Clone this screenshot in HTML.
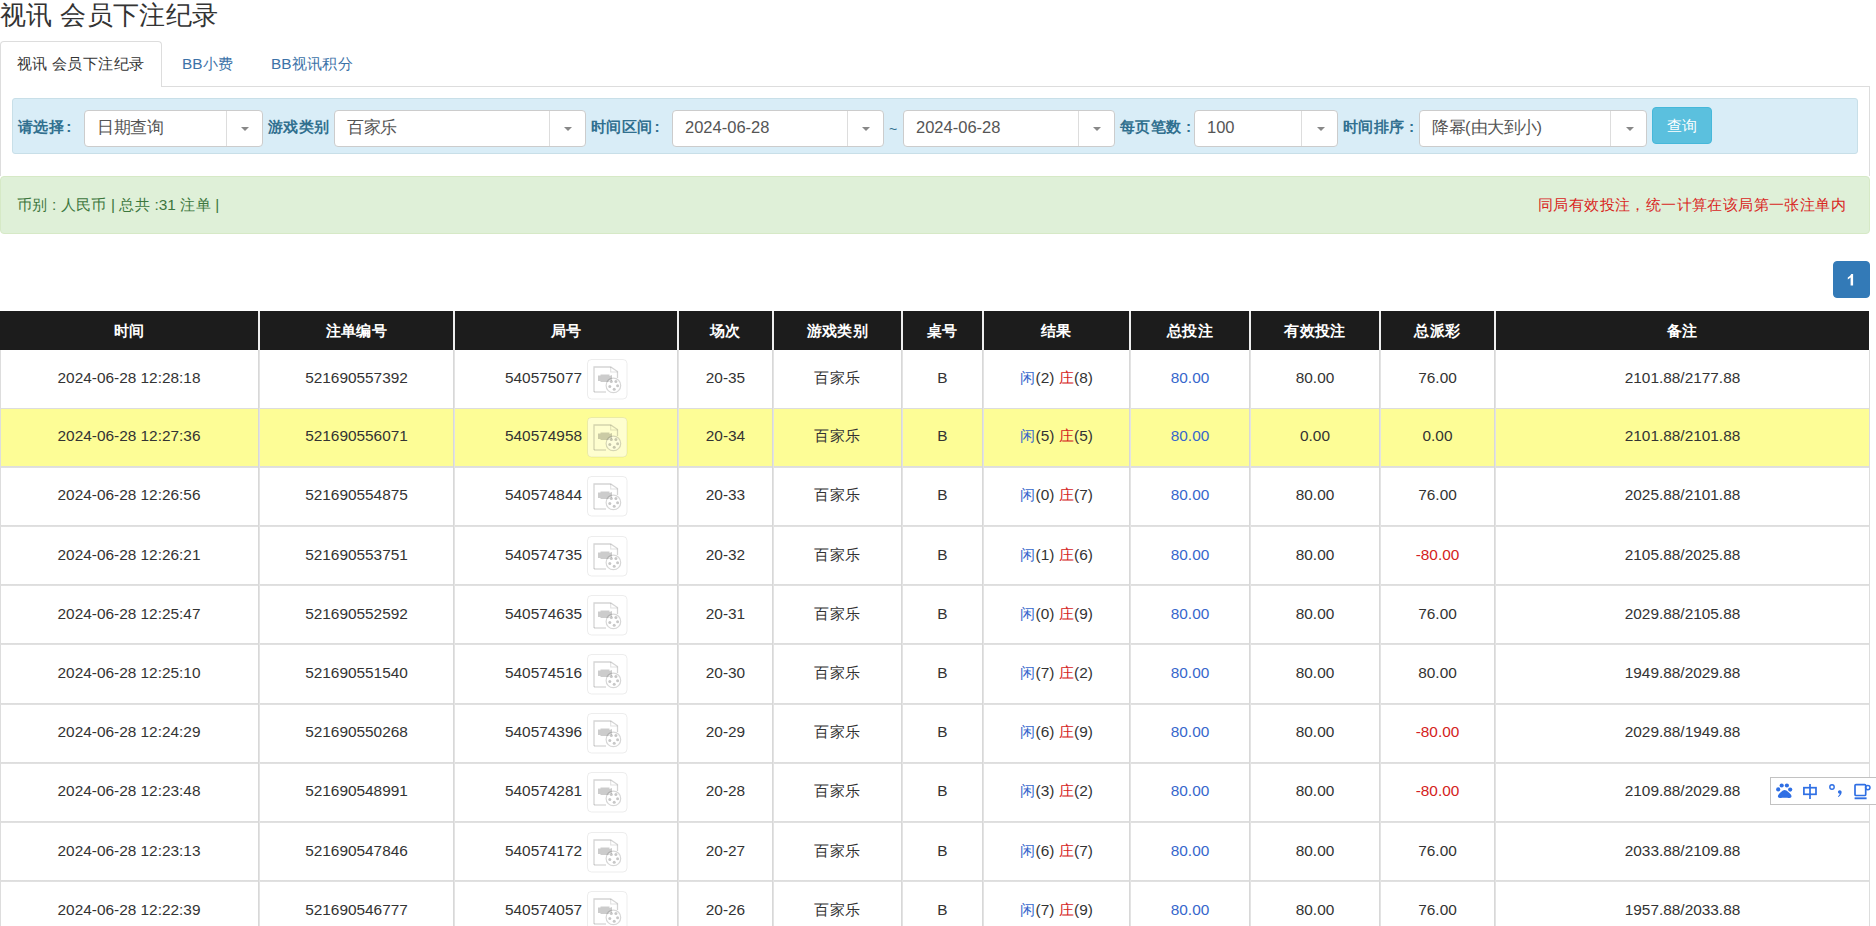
<!DOCTYPE html>
<html><head><meta charset="utf-8">
<style>
*{box-sizing:border-box;margin:0;padding:0}
html,body{width:1876px;height:926px;overflow:hidden;background:#fff}
body{font-family:"Liberation Sans",sans-serif;color:#333;font-size:15.4px;position:relative}
.a{position:absolute;white-space:nowrap}
.title{left:0;top:0;font-size:26.4px;line-height:30px;color:#333}
.tab{left:0;top:41px;width:162px;height:46px;border:1px solid #ddd;border-bottom:none;border-radius:4px 4px 0 0;background:#fff}
.tabline{left:161px;top:86px;width:1709px;height:1px;background:#ddd}
.pane{left:0;top:86px;width:1870px;height:90px;border-left:1px solid #ddd;border-right:1px solid #ddd}
.tabtxt{top:53px;line-height:22px;font-size:15.4px}
.filter{left:12px;top:98px;width:1846px;height:56px;background:#d9edf7;border:1px solid #c8dfe8;border-radius:3px}
.lbl{top:116px;line-height:22px;font-weight:bold;color:#31708f;font-size:15.4px}
.sel{top:110px;height:37px;background:#fff;border:1px solid #ccc;border-radius:4px}
.sel .t{position:absolute;left:12px;top:5px;line-height:22px;font-size:16.5px;color:#555}
.sel .sep{position:absolute;top:0;bottom:0;width:1px;background:#ddd}
.sel .car{position:absolute;top:16px;width:0;height:0;border-left:4px solid transparent;border-right:4px solid transparent;border-top:4px solid #888}
.btn{left:1652px;top:107px;width:60px;height:37px;background:#5bc0de;border:1px solid #46b8da;border-radius:4px;color:#fff;text-align:center;line-height:35px;font-size:15.4px}
.alert{left:0;top:176px;width:1870px;height:58px;background:#dff0d8;border:1px solid #d6e9c6;border-radius:4px}
.atxt{top:194px;line-height:22px;font-size:15.4px;color:#3c763d}
.ared{color:#d9251d}
.page{left:1833px;top:261px;width:37px;height:37px;background:#337ab7;border:1px solid #337ab7;border-radius:4px;color:#fff;text-align:center;line-height:35px;font-size:15.4px;font-weight:bold}
.tbl{left:0;top:311px;width:1870px}
.hd{position:absolute;top:0;height:39px;background:#1c1c1c;color:#fff;font-weight:bold;text-align:center;line-height:39px;font-size:15.4px}
.vl{position:absolute;width:2px;background:#ddd}
.hl{position:absolute;left:0;width:1870px;height:1px;background:#ddd}
.row{position:absolute;left:0;width:1870px}
.c{position:absolute;text-align:center;line-height:22px;font-size:15.4px;color:#333}
.blue{color:#3767cc}
.red{color:#d42222}
.ico{position:absolute}
.z{letter-spacing:.4px}
.sel .t .z{letter-spacing:-.5px}
</style></head><body>
<div class="a title"><span class="z">视讯</span> <span class="z">会员下注纪录</span></div>
<div class="a pane"></div>
<div class="a tab"></div>
<div class="a tabline"></div>
<div class="a tabtxt" style="left:17px"><span class="z">视讯</span> <span class="z">会员下注纪录</span></div>
<div class="a tabtxt" style="left:182px;color:#3c72a8">BB<span class="z">小费</span></div>
<div class="a tabtxt" style="left:271px;color:#3c72a8">BB<span class="z">视讯积分</span></div>

<div class="a filter"></div>
<div class="a lbl" style="left:18px"><span class="z">请选择</span><span style="margin-left:2px">:</span></div>
<div class="a sel" style="left:84px;width:179px"><span class="t"><span class="z">日期查询</span></span><span class="sep" style="left:141px"></span><span class="car" style="left:156px"></span></div>
<div class="a lbl" style="left:268px"><span class="z">游戏类别</span></div>
<div class="a sel" style="left:334px;width:252px"><span class="t"><span class="z">百家乐</span></span><span class="sep" style="left:214px"></span><span class="car" style="left:229px"></span></div>
<div class="a lbl" style="left:591px"><span class="z">时间区间</span><span style="margin-left:2px">:</span></div>
<div class="a sel" style="left:672px;width:212px"><span class="t">2024-06-28</span><span class="sep" style="left:174px"></span><span class="car" style="left:189px"></span></div>
<div class="a" style="left:889px;top:118px;line-height:22px;color:#31708f;font-size:14px">~</div>
<div class="a sel" style="left:903px;width:212px"><span class="t">2024-06-28</span><span class="sep" style="left:174px"></span><span class="car" style="left:189px"></span></div>
<div class="a lbl" style="left:1120px"><span class="z">每页笔数</span> :</div>
<div class="a sel" style="left:1194px;width:144px"><span class="t">100</span><span class="sep" style="left:106px"></span><span class="car" style="left:122px"></span></div>
<div class="a lbl" style="left:1343px"><span class="z">时间排序</span> :</div>
<div class="a sel" style="left:1419px;width:228px"><span class="t"><span class="z">降幂</span>(<span class="z">由大到小</span>)</span><span class="sep" style="left:190px"></span><span class="car" style="left:206px"></span></div>
<div class="a btn"><span class="z">查询</span></div>

<div class="a alert"></div>
<div class="a atxt" style="left:17px"><span class="z">币别</span> : <span class="z">人民币</span> | <span class="z">总共</span> :31 <span class="z">注单</span> |</div>
<div class="a atxt ared" style="left:1538px"><span class="z">同局有效投注，统一计算在该局第一张注单内</span></div>

<div class="a page"></div><svg class="a" style="left:1833px;top:261px" width="37" height="37" viewBox="0 0 37 37"><path d="M17.6 24.4V16.6C16.8 17.4 15.8 18 14.8 18.4V16.4C16.3 15.7 17.6 14.6 18.3 13H20.1V24.4Z" fill="#fff"/></svg>

<div class="a tbl">
<div class="hd" style="left:0px;width:258px"><span class="z">时间</span></div>
<div class="hd" style="left:260px;width:193px"><span class="z">注单编号</span></div>
<div class="hd" style="left:455px;width:222px"><span class="z">局号</span></div>
<div class="hd" style="left:679px;width:93px"><span class="z">场次</span></div>
<div class="hd" style="left:774px;width:127px"><span class="z">游戏类别</span></div>
<div class="hd" style="left:903px;width:79px"><span class="z">桌号</span></div>
<div class="hd" style="left:984px;width:145px"><span class="z">结果</span></div>
<div class="hd" style="left:1131px;width:118px"><span class="z">总投注</span></div>
<div class="hd" style="left:1251px;width:128px"><span class="z">有效投注</span></div>
<div class="hd" style="left:1381px;width:113px"><span class="z">总派彩</span></div>
<div class="hd" style="left:1496px;width:373px"><span class="z">备注</span></div>
<div class="row" style="top:98px;height:57px;background:#fdfd96"></div>
<div class="hl" style="top:97px;height:1px"></div>
<div class="hl" style="top:155px;height:2px;background:linear-gradient(#dcdcdc,#e2e2e2)"></div>
<div class="hl" style="top:214px;height:2px;background:linear-gradient(#dcdcdc,#e2e2e2)"></div>
<div class="hl" style="top:273px;height:2px;background:linear-gradient(#dcdcdc,#e2e2e2)"></div>
<div class="hl" style="top:332px;height:2px;background:linear-gradient(#dcdcdc,#e2e2e2)"></div>
<div class="hl" style="top:392px;height:2px;background:linear-gradient(#dcdcdc,#e2e2e2)"></div>
<div class="hl" style="top:451px;height:2px;background:linear-gradient(#dcdcdc,#e2e2e2)"></div>
<div class="hl" style="top:510px;height:2px;background:linear-gradient(#dcdcdc,#e2e2e2)"></div>
<div class="hl" style="top:569px;height:2px;background:linear-gradient(#dcdcdc,#e2e2e2)"></div>
<div class="hl" style="top:628px;height:2px;background:linear-gradient(#dcdcdc,#e2e2e2)"></div>
<div class="vl" style="left:0;top:39px;height:700px;width:1px;background:#ddd"></div>
<div class="vl" style="left:1869px;top:39px;height:700px;width:1px;background:#ddd"></div>
<div class="vl" style="left:258px;top:0;height:39px;background:#eee"></div>
<div class="vl" style="left:258px;top:39px;height:700px;background:linear-gradient(90deg,#d8d8d8 50%,#e3e3e3 50%)"></div>
<div class="vl" style="left:453px;top:0;height:39px;background:#eee"></div>
<div class="vl" style="left:453px;top:39px;height:700px;background:linear-gradient(90deg,#d8d8d8 50%,#e3e3e3 50%)"></div>
<div class="vl" style="left:677px;top:0;height:39px;background:#eee"></div>
<div class="vl" style="left:677px;top:39px;height:700px;background:linear-gradient(90deg,#d8d8d8 50%,#e3e3e3 50%)"></div>
<div class="vl" style="left:772px;top:0;height:39px;background:#eee"></div>
<div class="vl" style="left:772px;top:39px;height:700px;background:linear-gradient(90deg,#d8d8d8 50%,#e3e3e3 50%)"></div>
<div class="vl" style="left:901px;top:0;height:39px;background:#eee"></div>
<div class="vl" style="left:901px;top:39px;height:700px;background:linear-gradient(90deg,#d8d8d8 50%,#e3e3e3 50%)"></div>
<div class="vl" style="left:982px;top:0;height:39px;background:#eee"></div>
<div class="vl" style="left:982px;top:39px;height:700px;background:linear-gradient(90deg,#d8d8d8 50%,#e3e3e3 50%)"></div>
<div class="vl" style="left:1129px;top:0;height:39px;background:#eee"></div>
<div class="vl" style="left:1129px;top:39px;height:700px;background:linear-gradient(90deg,#d8d8d8 50%,#e3e3e3 50%)"></div>
<div class="vl" style="left:1249px;top:0;height:39px;background:#eee"></div>
<div class="vl" style="left:1249px;top:39px;height:700px;background:linear-gradient(90deg,#d8d8d8 50%,#e3e3e3 50%)"></div>
<div class="vl" style="left:1379px;top:0;height:39px;background:#eee"></div>
<div class="vl" style="left:1379px;top:39px;height:700px;background:linear-gradient(90deg,#d8d8d8 50%,#e3e3e3 50%)"></div>
<div class="vl" style="left:1494px;top:0;height:39px;background:#eee"></div>
<div class="vl" style="left:1494px;top:39px;height:700px;background:linear-gradient(90deg,#d8d8d8 50%,#e3e3e3 50%)"></div>
<div class="c" style="left:0px;width:258px;top:56px">2024-06-28 12:28:18</div>
<div class="c" style="left:260px;width:193px;top:56px">521690557392</div>
<div class="c" style="left:455px;width:222px;top:56px">540575077<span style="display:inline-block;width:45px"></span></div>
<svg class="ico" style="left:587px;top:48px" width="41" height="41" viewBox="0 0 41 41"><rect x="0.5" y="0.5" width="39.5" height="39.5" rx="4" fill="rgba(255,255,255,.55)" stroke="rgba(0,0,0,.07)"/><path d="M7 33V8H23.7L30.5 12.5V19" fill="none" stroke="rgba(0,0,0,.17)" stroke-width="1.3"/><path d="M23.7 8V13H30.5" fill="none" stroke="rgba(0,0,0,.12)" stroke-width="1.1"/><path d="M7 33H19" fill="none" stroke="rgba(0,0,0,.17)" stroke-width="1.3"/><path d="M11 16.5H13.5V15.5H22.5V17L25 16V22L22.5 21V23H13.5V22H11Z" fill="rgba(0,0,0,.2)"/><circle cx="26.4" cy="26.4" r="7.3" fill="rgba(255,255,255,.3)" stroke="rgba(0,0,0,.16)" stroke-width="1.2"/><g fill="rgba(0,0,0,.22)"><circle cx="24.3" cy="22.6" r="1.5"/><circle cx="28.9" cy="22.6" r="1.5"/><circle cx="30.6" cy="26.8" r="1.5"/><circle cx="27.2" cy="30.2" r="1.5"/><circle cx="22.8" cy="27.6" r="1.5"/></g></svg>
<div class="c" style="left:679px;width:93px;top:56px">20-35</div>
<div class="c" style="left:774px;width:127px;top:56px"><span class="z">百家乐</span></div>
<div class="c" style="left:903px;width:79px;top:56px">B</div>
<div class="c" style="left:984px;width:145px;top:56px"><span class="blue"><span class="z">闲</span></span>(2) <span class="red"><span class="z">庄</span></span>(8)</div>
<div class="c" style="left:1131px;width:118px;top:56px"><span class="blue">80.00</span></div>
<div class="c" style="left:1251px;width:128px;top:56px">80.00</div>
<div class="c" style="left:1381px;width:113px;top:56px">76.00</div>
<div class="c" style="left:1496px;width:373px;top:56px">2101.88/2177.88</div>
<div class="c" style="left:0px;width:258px;top:114px">2024-06-28 12:27:36</div>
<div class="c" style="left:260px;width:193px;top:114px">521690556071</div>
<div class="c" style="left:455px;width:222px;top:114px">540574958<span style="display:inline-block;width:45px"></span></div>
<svg class="ico" style="left:587px;top:106px" width="41" height="41" viewBox="0 0 41 41"><rect x="0.5" y="0.5" width="39.5" height="39.5" rx="4" fill="rgba(255,255,255,.55)" stroke="rgba(0,0,0,.07)"/><path d="M7 33V8H23.7L30.5 12.5V19" fill="none" stroke="rgba(0,0,0,.17)" stroke-width="1.3"/><path d="M23.7 8V13H30.5" fill="none" stroke="rgba(0,0,0,.12)" stroke-width="1.1"/><path d="M7 33H19" fill="none" stroke="rgba(0,0,0,.17)" stroke-width="1.3"/><path d="M11 16.5H13.5V15.5H22.5V17L25 16V22L22.5 21V23H13.5V22H11Z" fill="rgba(0,0,0,.2)"/><circle cx="26.4" cy="26.4" r="7.3" fill="rgba(255,255,255,.3)" stroke="rgba(0,0,0,.16)" stroke-width="1.2"/><g fill="rgba(0,0,0,.22)"><circle cx="24.3" cy="22.6" r="1.5"/><circle cx="28.9" cy="22.6" r="1.5"/><circle cx="30.6" cy="26.8" r="1.5"/><circle cx="27.2" cy="30.2" r="1.5"/><circle cx="22.8" cy="27.6" r="1.5"/></g></svg>
<div class="c" style="left:679px;width:93px;top:114px">20-34</div>
<div class="c" style="left:774px;width:127px;top:114px"><span class="z">百家乐</span></div>
<div class="c" style="left:903px;width:79px;top:114px">B</div>
<div class="c" style="left:984px;width:145px;top:114px"><span class="blue"><span class="z">闲</span></span>(5) <span class="red"><span class="z">庄</span></span>(5)</div>
<div class="c" style="left:1131px;width:118px;top:114px"><span class="blue">80.00</span></div>
<div class="c" style="left:1251px;width:128px;top:114px">0.00</div>
<div class="c" style="left:1381px;width:113px;top:114px">0.00</div>
<div class="c" style="left:1496px;width:373px;top:114px">2101.88/2101.88</div>
<div class="c" style="left:0px;width:258px;top:173px">2024-06-28 12:26:56</div>
<div class="c" style="left:260px;width:193px;top:173px">521690554875</div>
<div class="c" style="left:455px;width:222px;top:173px">540574844<span style="display:inline-block;width:45px"></span></div>
<svg class="ico" style="left:587px;top:165px" width="41" height="41" viewBox="0 0 41 41"><rect x="0.5" y="0.5" width="39.5" height="39.5" rx="4" fill="rgba(255,255,255,.55)" stroke="rgba(0,0,0,.07)"/><path d="M7 33V8H23.7L30.5 12.5V19" fill="none" stroke="rgba(0,0,0,.17)" stroke-width="1.3"/><path d="M23.7 8V13H30.5" fill="none" stroke="rgba(0,0,0,.12)" stroke-width="1.1"/><path d="M7 33H19" fill="none" stroke="rgba(0,0,0,.17)" stroke-width="1.3"/><path d="M11 16.5H13.5V15.5H22.5V17L25 16V22L22.5 21V23H13.5V22H11Z" fill="rgba(0,0,0,.2)"/><circle cx="26.4" cy="26.4" r="7.3" fill="rgba(255,255,255,.3)" stroke="rgba(0,0,0,.16)" stroke-width="1.2"/><g fill="rgba(0,0,0,.22)"><circle cx="24.3" cy="22.6" r="1.5"/><circle cx="28.9" cy="22.6" r="1.5"/><circle cx="30.6" cy="26.8" r="1.5"/><circle cx="27.2" cy="30.2" r="1.5"/><circle cx="22.8" cy="27.6" r="1.5"/></g></svg>
<div class="c" style="left:679px;width:93px;top:173px">20-33</div>
<div class="c" style="left:774px;width:127px;top:173px"><span class="z">百家乐</span></div>
<div class="c" style="left:903px;width:79px;top:173px">B</div>
<div class="c" style="left:984px;width:145px;top:173px"><span class="blue"><span class="z">闲</span></span>(0) <span class="red"><span class="z">庄</span></span>(7)</div>
<div class="c" style="left:1131px;width:118px;top:173px"><span class="blue">80.00</span></div>
<div class="c" style="left:1251px;width:128px;top:173px">80.00</div>
<div class="c" style="left:1381px;width:113px;top:173px">76.00</div>
<div class="c" style="left:1496px;width:373px;top:173px">2025.88/2101.88</div>
<div class="c" style="left:0px;width:258px;top:233px">2024-06-28 12:26:21</div>
<div class="c" style="left:260px;width:193px;top:233px">521690553751</div>
<div class="c" style="left:455px;width:222px;top:233px">540574735<span style="display:inline-block;width:45px"></span></div>
<svg class="ico" style="left:587px;top:225px" width="41" height="41" viewBox="0 0 41 41"><rect x="0.5" y="0.5" width="39.5" height="39.5" rx="4" fill="rgba(255,255,255,.55)" stroke="rgba(0,0,0,.07)"/><path d="M7 33V8H23.7L30.5 12.5V19" fill="none" stroke="rgba(0,0,0,.17)" stroke-width="1.3"/><path d="M23.7 8V13H30.5" fill="none" stroke="rgba(0,0,0,.12)" stroke-width="1.1"/><path d="M7 33H19" fill="none" stroke="rgba(0,0,0,.17)" stroke-width="1.3"/><path d="M11 16.5H13.5V15.5H22.5V17L25 16V22L22.5 21V23H13.5V22H11Z" fill="rgba(0,0,0,.2)"/><circle cx="26.4" cy="26.4" r="7.3" fill="rgba(255,255,255,.3)" stroke="rgba(0,0,0,.16)" stroke-width="1.2"/><g fill="rgba(0,0,0,.22)"><circle cx="24.3" cy="22.6" r="1.5"/><circle cx="28.9" cy="22.6" r="1.5"/><circle cx="30.6" cy="26.8" r="1.5"/><circle cx="27.2" cy="30.2" r="1.5"/><circle cx="22.8" cy="27.6" r="1.5"/></g></svg>
<div class="c" style="left:679px;width:93px;top:233px">20-32</div>
<div class="c" style="left:774px;width:127px;top:233px"><span class="z">百家乐</span></div>
<div class="c" style="left:903px;width:79px;top:233px">B</div>
<div class="c" style="left:984px;width:145px;top:233px"><span class="blue"><span class="z">闲</span></span>(1) <span class="red"><span class="z">庄</span></span>(6)</div>
<div class="c" style="left:1131px;width:118px;top:233px"><span class="blue">80.00</span></div>
<div class="c" style="left:1251px;width:128px;top:233px">80.00</div>
<div class="c" style="left:1381px;width:113px;top:233px"><span class="red">-80.00</span></div>
<div class="c" style="left:1496px;width:373px;top:233px">2105.88/2025.88</div>
<div class="c" style="left:0px;width:258px;top:292px">2024-06-28 12:25:47</div>
<div class="c" style="left:260px;width:193px;top:292px">521690552592</div>
<div class="c" style="left:455px;width:222px;top:292px">540574635<span style="display:inline-block;width:45px"></span></div>
<svg class="ico" style="left:587px;top:284px" width="41" height="41" viewBox="0 0 41 41"><rect x="0.5" y="0.5" width="39.5" height="39.5" rx="4" fill="rgba(255,255,255,.55)" stroke="rgba(0,0,0,.07)"/><path d="M7 33V8H23.7L30.5 12.5V19" fill="none" stroke="rgba(0,0,0,.17)" stroke-width="1.3"/><path d="M23.7 8V13H30.5" fill="none" stroke="rgba(0,0,0,.12)" stroke-width="1.1"/><path d="M7 33H19" fill="none" stroke="rgba(0,0,0,.17)" stroke-width="1.3"/><path d="M11 16.5H13.5V15.5H22.5V17L25 16V22L22.5 21V23H13.5V22H11Z" fill="rgba(0,0,0,.2)"/><circle cx="26.4" cy="26.4" r="7.3" fill="rgba(255,255,255,.3)" stroke="rgba(0,0,0,.16)" stroke-width="1.2"/><g fill="rgba(0,0,0,.22)"><circle cx="24.3" cy="22.6" r="1.5"/><circle cx="28.9" cy="22.6" r="1.5"/><circle cx="30.6" cy="26.8" r="1.5"/><circle cx="27.2" cy="30.2" r="1.5"/><circle cx="22.8" cy="27.6" r="1.5"/></g></svg>
<div class="c" style="left:679px;width:93px;top:292px">20-31</div>
<div class="c" style="left:774px;width:127px;top:292px"><span class="z">百家乐</span></div>
<div class="c" style="left:903px;width:79px;top:292px">B</div>
<div class="c" style="left:984px;width:145px;top:292px"><span class="blue"><span class="z">闲</span></span>(0) <span class="red"><span class="z">庄</span></span>(9)</div>
<div class="c" style="left:1131px;width:118px;top:292px"><span class="blue">80.00</span></div>
<div class="c" style="left:1251px;width:128px;top:292px">80.00</div>
<div class="c" style="left:1381px;width:113px;top:292px">76.00</div>
<div class="c" style="left:1496px;width:373px;top:292px">2029.88/2105.88</div>
<div class="c" style="left:0px;width:258px;top:351px">2024-06-28 12:25:10</div>
<div class="c" style="left:260px;width:193px;top:351px">521690551540</div>
<div class="c" style="left:455px;width:222px;top:351px">540574516<span style="display:inline-block;width:45px"></span></div>
<svg class="ico" style="left:587px;top:343px" width="41" height="41" viewBox="0 0 41 41"><rect x="0.5" y="0.5" width="39.5" height="39.5" rx="4" fill="rgba(255,255,255,.55)" stroke="rgba(0,0,0,.07)"/><path d="M7 33V8H23.7L30.5 12.5V19" fill="none" stroke="rgba(0,0,0,.17)" stroke-width="1.3"/><path d="M23.7 8V13H30.5" fill="none" stroke="rgba(0,0,0,.12)" stroke-width="1.1"/><path d="M7 33H19" fill="none" stroke="rgba(0,0,0,.17)" stroke-width="1.3"/><path d="M11 16.5H13.5V15.5H22.5V17L25 16V22L22.5 21V23H13.5V22H11Z" fill="rgba(0,0,0,.2)"/><circle cx="26.4" cy="26.4" r="7.3" fill="rgba(255,255,255,.3)" stroke="rgba(0,0,0,.16)" stroke-width="1.2"/><g fill="rgba(0,0,0,.22)"><circle cx="24.3" cy="22.6" r="1.5"/><circle cx="28.9" cy="22.6" r="1.5"/><circle cx="30.6" cy="26.8" r="1.5"/><circle cx="27.2" cy="30.2" r="1.5"/><circle cx="22.8" cy="27.6" r="1.5"/></g></svg>
<div class="c" style="left:679px;width:93px;top:351px">20-30</div>
<div class="c" style="left:774px;width:127px;top:351px"><span class="z">百家乐</span></div>
<div class="c" style="left:903px;width:79px;top:351px">B</div>
<div class="c" style="left:984px;width:145px;top:351px"><span class="blue"><span class="z">闲</span></span>(7) <span class="red"><span class="z">庄</span></span>(2)</div>
<div class="c" style="left:1131px;width:118px;top:351px"><span class="blue">80.00</span></div>
<div class="c" style="left:1251px;width:128px;top:351px">80.00</div>
<div class="c" style="left:1381px;width:113px;top:351px">80.00</div>
<div class="c" style="left:1496px;width:373px;top:351px">1949.88/2029.88</div>
<div class="c" style="left:0px;width:258px;top:410px">2024-06-28 12:24:29</div>
<div class="c" style="left:260px;width:193px;top:410px">521690550268</div>
<div class="c" style="left:455px;width:222px;top:410px">540574396<span style="display:inline-block;width:45px"></span></div>
<svg class="ico" style="left:587px;top:402px" width="41" height="41" viewBox="0 0 41 41"><rect x="0.5" y="0.5" width="39.5" height="39.5" rx="4" fill="rgba(255,255,255,.55)" stroke="rgba(0,0,0,.07)"/><path d="M7 33V8H23.7L30.5 12.5V19" fill="none" stroke="rgba(0,0,0,.17)" stroke-width="1.3"/><path d="M23.7 8V13H30.5" fill="none" stroke="rgba(0,0,0,.12)" stroke-width="1.1"/><path d="M7 33H19" fill="none" stroke="rgba(0,0,0,.17)" stroke-width="1.3"/><path d="M11 16.5H13.5V15.5H22.5V17L25 16V22L22.5 21V23H13.5V22H11Z" fill="rgba(0,0,0,.2)"/><circle cx="26.4" cy="26.4" r="7.3" fill="rgba(255,255,255,.3)" stroke="rgba(0,0,0,.16)" stroke-width="1.2"/><g fill="rgba(0,0,0,.22)"><circle cx="24.3" cy="22.6" r="1.5"/><circle cx="28.9" cy="22.6" r="1.5"/><circle cx="30.6" cy="26.8" r="1.5"/><circle cx="27.2" cy="30.2" r="1.5"/><circle cx="22.8" cy="27.6" r="1.5"/></g></svg>
<div class="c" style="left:679px;width:93px;top:410px">20-29</div>
<div class="c" style="left:774px;width:127px;top:410px"><span class="z">百家乐</span></div>
<div class="c" style="left:903px;width:79px;top:410px">B</div>
<div class="c" style="left:984px;width:145px;top:410px"><span class="blue"><span class="z">闲</span></span>(6) <span class="red"><span class="z">庄</span></span>(9)</div>
<div class="c" style="left:1131px;width:118px;top:410px"><span class="blue">80.00</span></div>
<div class="c" style="left:1251px;width:128px;top:410px">80.00</div>
<div class="c" style="left:1381px;width:113px;top:410px"><span class="red">-80.00</span></div>
<div class="c" style="left:1496px;width:373px;top:410px">2029.88/1949.88</div>
<div class="c" style="left:0px;width:258px;top:469px">2024-06-28 12:23:48</div>
<div class="c" style="left:260px;width:193px;top:469px">521690548991</div>
<div class="c" style="left:455px;width:222px;top:469px">540574281<span style="display:inline-block;width:45px"></span></div>
<svg class="ico" style="left:587px;top:461px" width="41" height="41" viewBox="0 0 41 41"><rect x="0.5" y="0.5" width="39.5" height="39.5" rx="4" fill="rgba(255,255,255,.55)" stroke="rgba(0,0,0,.07)"/><path d="M7 33V8H23.7L30.5 12.5V19" fill="none" stroke="rgba(0,0,0,.17)" stroke-width="1.3"/><path d="M23.7 8V13H30.5" fill="none" stroke="rgba(0,0,0,.12)" stroke-width="1.1"/><path d="M7 33H19" fill="none" stroke="rgba(0,0,0,.17)" stroke-width="1.3"/><path d="M11 16.5H13.5V15.5H22.5V17L25 16V22L22.5 21V23H13.5V22H11Z" fill="rgba(0,0,0,.2)"/><circle cx="26.4" cy="26.4" r="7.3" fill="rgba(255,255,255,.3)" stroke="rgba(0,0,0,.16)" stroke-width="1.2"/><g fill="rgba(0,0,0,.22)"><circle cx="24.3" cy="22.6" r="1.5"/><circle cx="28.9" cy="22.6" r="1.5"/><circle cx="30.6" cy="26.8" r="1.5"/><circle cx="27.2" cy="30.2" r="1.5"/><circle cx="22.8" cy="27.6" r="1.5"/></g></svg>
<div class="c" style="left:679px;width:93px;top:469px">20-28</div>
<div class="c" style="left:774px;width:127px;top:469px"><span class="z">百家乐</span></div>
<div class="c" style="left:903px;width:79px;top:469px">B</div>
<div class="c" style="left:984px;width:145px;top:469px"><span class="blue"><span class="z">闲</span></span>(3) <span class="red"><span class="z">庄</span></span>(2)</div>
<div class="c" style="left:1131px;width:118px;top:469px"><span class="blue">80.00</span></div>
<div class="c" style="left:1251px;width:128px;top:469px">80.00</div>
<div class="c" style="left:1381px;width:113px;top:469px"><span class="red">-80.00</span></div>
<div class="c" style="left:1496px;width:373px;top:469px">2109.88/2029.88</div>
<div class="c" style="left:0px;width:258px;top:529px">2024-06-28 12:23:13</div>
<div class="c" style="left:260px;width:193px;top:529px">521690547846</div>
<div class="c" style="left:455px;width:222px;top:529px">540574172<span style="display:inline-block;width:45px"></span></div>
<svg class="ico" style="left:587px;top:521px" width="41" height="41" viewBox="0 0 41 41"><rect x="0.5" y="0.5" width="39.5" height="39.5" rx="4" fill="rgba(255,255,255,.55)" stroke="rgba(0,0,0,.07)"/><path d="M7 33V8H23.7L30.5 12.5V19" fill="none" stroke="rgba(0,0,0,.17)" stroke-width="1.3"/><path d="M23.7 8V13H30.5" fill="none" stroke="rgba(0,0,0,.12)" stroke-width="1.1"/><path d="M7 33H19" fill="none" stroke="rgba(0,0,0,.17)" stroke-width="1.3"/><path d="M11 16.5H13.5V15.5H22.5V17L25 16V22L22.5 21V23H13.5V22H11Z" fill="rgba(0,0,0,.2)"/><circle cx="26.4" cy="26.4" r="7.3" fill="rgba(255,255,255,.3)" stroke="rgba(0,0,0,.16)" stroke-width="1.2"/><g fill="rgba(0,0,0,.22)"><circle cx="24.3" cy="22.6" r="1.5"/><circle cx="28.9" cy="22.6" r="1.5"/><circle cx="30.6" cy="26.8" r="1.5"/><circle cx="27.2" cy="30.2" r="1.5"/><circle cx="22.8" cy="27.6" r="1.5"/></g></svg>
<div class="c" style="left:679px;width:93px;top:529px">20-27</div>
<div class="c" style="left:774px;width:127px;top:529px"><span class="z">百家乐</span></div>
<div class="c" style="left:903px;width:79px;top:529px">B</div>
<div class="c" style="left:984px;width:145px;top:529px"><span class="blue"><span class="z">闲</span></span>(6) <span class="red"><span class="z">庄</span></span>(7)</div>
<div class="c" style="left:1131px;width:118px;top:529px"><span class="blue">80.00</span></div>
<div class="c" style="left:1251px;width:128px;top:529px">80.00</div>
<div class="c" style="left:1381px;width:113px;top:529px">76.00</div>
<div class="c" style="left:1496px;width:373px;top:529px">2033.88/2109.88</div>
<div class="c" style="left:0px;width:258px;top:588px">2024-06-28 12:22:39</div>
<div class="c" style="left:260px;width:193px;top:588px">521690546777</div>
<div class="c" style="left:455px;width:222px;top:588px">540574057<span style="display:inline-block;width:45px"></span></div>
<svg class="ico" style="left:587px;top:580px" width="41" height="41" viewBox="0 0 41 41"><rect x="0.5" y="0.5" width="39.5" height="39.5" rx="4" fill="rgba(255,255,255,.55)" stroke="rgba(0,0,0,.07)"/><path d="M7 33V8H23.7L30.5 12.5V19" fill="none" stroke="rgba(0,0,0,.17)" stroke-width="1.3"/><path d="M23.7 8V13H30.5" fill="none" stroke="rgba(0,0,0,.12)" stroke-width="1.1"/><path d="M7 33H19" fill="none" stroke="rgba(0,0,0,.17)" stroke-width="1.3"/><path d="M11 16.5H13.5V15.5H22.5V17L25 16V22L22.5 21V23H13.5V22H11Z" fill="rgba(0,0,0,.2)"/><circle cx="26.4" cy="26.4" r="7.3" fill="rgba(255,255,255,.3)" stroke="rgba(0,0,0,.16)" stroke-width="1.2"/><g fill="rgba(0,0,0,.22)"><circle cx="24.3" cy="22.6" r="1.5"/><circle cx="28.9" cy="22.6" r="1.5"/><circle cx="30.6" cy="26.8" r="1.5"/><circle cx="27.2" cy="30.2" r="1.5"/><circle cx="22.8" cy="27.6" r="1.5"/></g></svg>
<div class="c" style="left:679px;width:93px;top:588px">20-26</div>
<div class="c" style="left:774px;width:127px;top:588px"><span class="z">百家乐</span></div>
<div class="c" style="left:903px;width:79px;top:588px">B</div>
<div class="c" style="left:984px;width:145px;top:588px"><span class="blue"><span class="z">闲</span></span>(7) <span class="red"><span class="z">庄</span></span>(9)</div>
<div class="c" style="left:1131px;width:118px;top:588px"><span class="blue">80.00</span></div>
<div class="c" style="left:1251px;width:128px;top:588px">80.00</div>
<div class="c" style="left:1381px;width:113px;top:588px">76.00</div>
<div class="c" style="left:1496px;width:373px;top:588px">1957.88/2033.88</div>
</div>

<div class="a" style="left:1770px;top:777px;width:120px;height:28px;background:#fff;border:1px solid #c2c2c2"></div>
<svg class="a" style="left:1770px;top:777px" width="106" height="28" viewBox="0 0 106 28">
<g fill="#2f6fe4">
<circle cx="8.2" cy="12.4" r="2.1"/><circle cx="11.7" cy="8.5" r="2.1"/><circle cx="16.9" cy="8.5" r="2.1"/><circle cx="20.2" cy="12.6" r="2.1"/>
<path d="M8.2 20.3C7.2 18.8 8.8 16.8 10.8 15.2C12.5 13.8 13.5 12.9 14.6 12.9C15.9 12.9 16.9 13.8 18.6 15.2C20.6 16.8 22.2 18.8 21.2 20.3C20.4 21.4 19 21 17.2 20.8C15.6 20.6 13.8 20.6 12.2 20.8C10.4 21 9 21.4 8.2 20.3Z"/>
</g>
<g fill="none" stroke="#2f6fe4" stroke-width="1.7">
<rect x="33.9" y="10.7" width="12.1" height="6.6"/><path d="M40 7V22"/>
<circle cx="62" cy="10" r="2.2" stroke-width="1.4"/>
<rect x="85" y="7.6" width="10.7" height="10.9" rx="1"/>
<circle cx="97.8" cy="10.6" r="2.2" stroke-width="1.5"/>
<path d="M84.6 21.3H96.6" stroke-width="1.9"/>
</g>
<path d="M69.6 13.2C71.2 13.2 71.9 14.3 71.6 15.8C71.2 17.8 69.8 19.3 68.4 20.1L67.9 19.3C68.9 18.5 69.6 17.6 69.7 16.7C68.8 16.7 68 16 68 15C68 13.9 68.7 13.2 69.6 13.2Z" fill="#2f6fe4"/>
</svg>
</body></html>
